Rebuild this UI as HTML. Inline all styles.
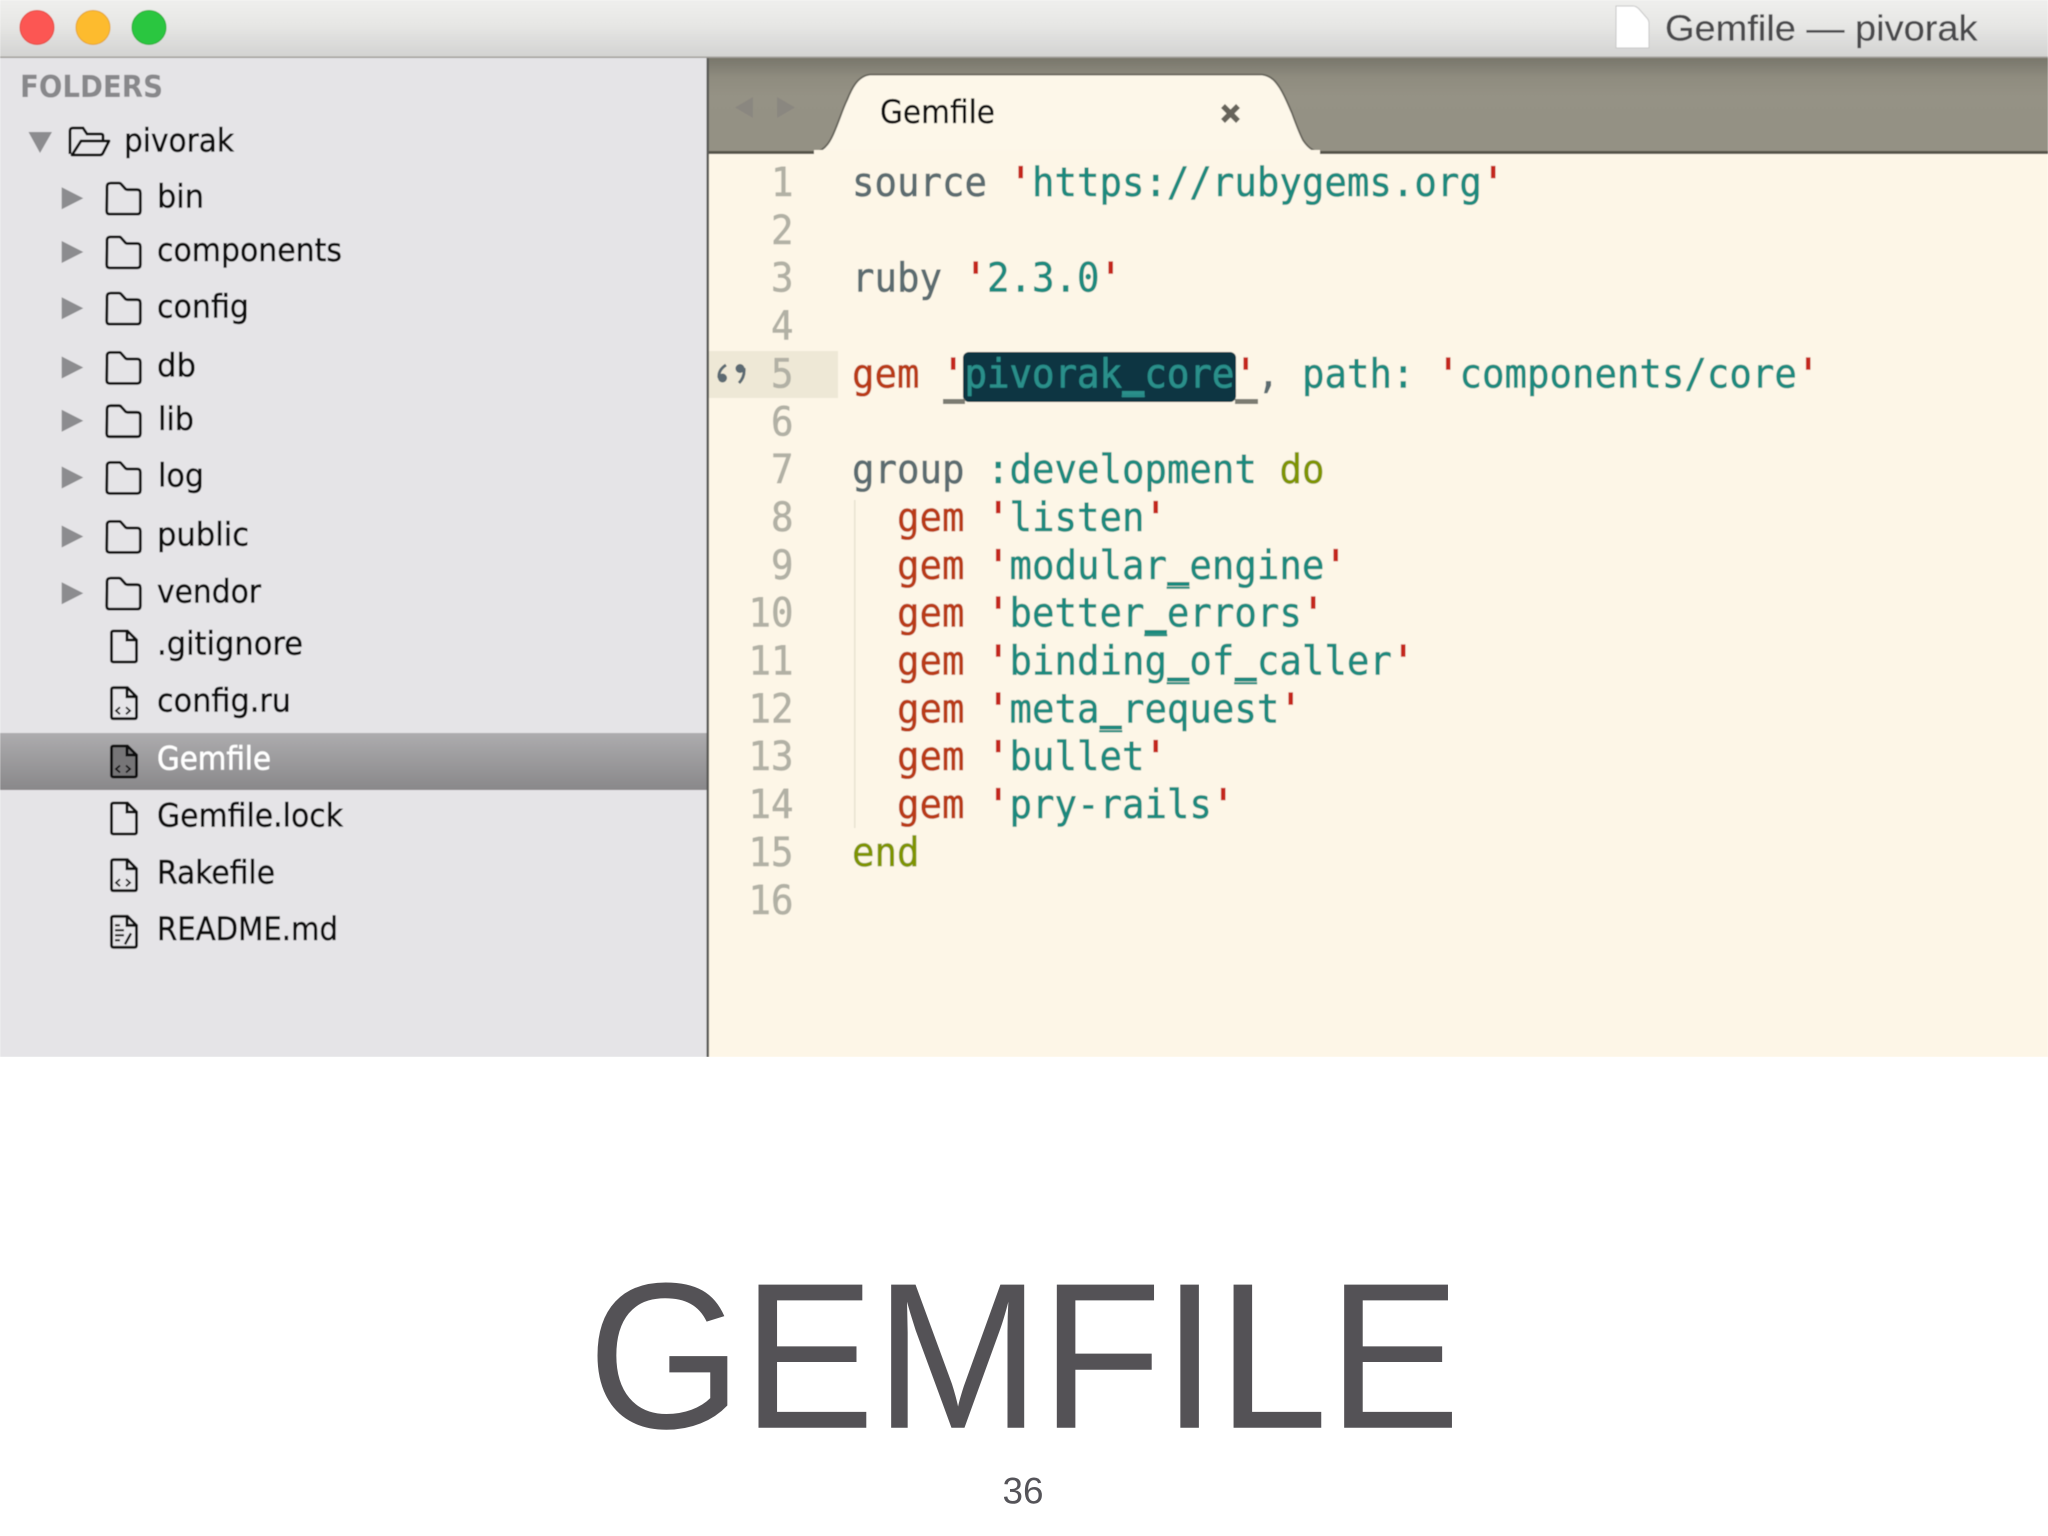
<!DOCTYPE html>
<html>
<head>
<meta charset="utf-8">
<title>Gemfile</title>
<style>
html,body{margin:0;padding:0;background:#fff;width:2048px;height:1536px;overflow:hidden}
svg{display:block;position:absolute;left:0;top:0}
.side text{font-family:"DejaVu Sans","Liberation Sans",sans-serif;font-size:32px;fill:#0c0c0c;stroke:#0c0c0c;stroke-width:.5px;transform:translateY(.7px)}
.code text{font-family:"DejaVu Sans Mono","Liberation Mono",monospace;font-size:37.37px;white-space:pre;stroke-width:.55px}
.n{fill:#b2b1a5;stroke:#b2b1a5}.k{fill:#5b6c70;stroke:#5b6c70}.r{fill:#b93a17;stroke:#b93a17}.q{fill:#c4261a;stroke:#c4261a;stroke-width:1.4px !important}.s{fill:#1f8a7e;stroke:#1f8a7e}.o{fill:#7f9400;stroke:#7f9400}
.u{fill:#1f8a7e}
</style>
</head>
<body>
<svg width="2048" height="1536" viewBox="0 0 2048 1536" xmlns="http://www.w3.org/2000/svg">
<defs>
<linearGradient id="tb" x1="0" y1="0" x2="0" y2="1"><stop offset="0" stop-color="#efefed"/><stop offset=".45" stop-color="#e6e6e4"/><stop offset="1" stop-color="#d2d2d1"/></linearGradient>
<linearGradient id="sel" x1="0" y1="0" x2="0" y2="1"><stop offset="0" stop-color="#adacae"/><stop offset="1" stop-color="#89888a"/></linearGradient>
<linearGradient id="bar" x1="0" y1="0" x2="0" y2="1"><stop offset="0" stop-color="#78766b"/><stop offset=".2" stop-color="#8f8c7f"/><stop offset=".4" stop-color="#959285"/><stop offset="1" stop-color="#949184"/></linearGradient>
<filter id="b" x="0" y="0" width="100%" height="100%"><feGaussianBlur stdDeviation=".6"/></filter>
<path id="tri" d="M61.7,-19.5 L83.3,-8.5 L61.7,2.5 Z" fill="#8c8c8f"/>
<path id="folder" d="M107,-20 q0,-3.6 3.6,-3.6 h8.5 q1.5,0 2.5,1.5 l4,4.5 q1,.6 2,.6 h9.5 q3.2,0 3.2,3 v18.4 q0,3 -3,3 h-27.6 q-3,0 -3,-3 z" fill="none" stroke="#0c0c0c" stroke-width="2.8"/>
<path id="file" d="M111.5,-21 q0,-2 2,-2 h14 l9,9 v20 q0,2 -2,2 h-21 q-2,0 -2,-2 z M127,-23 v9 h9.5" fill="none" stroke="#0c0c0c" stroke-width="2.8"/>
<path id="cd" d="M120,-3.5 l-4,3.5 4,3.5 M126,-3.5 l4,3.5 -4,3.5" fill="none" stroke="#0c0c0c" stroke-width="1.8"/>
</defs>

<g filter="url(#b)">
<!-- title bar -->
<rect x="0" y="0" width="2048" height="58" fill="url(#tb)"/>
<rect x="0" y="56.5" width="2048" height="2" fill="#a09e9a"/>
<circle cx="37" cy="27.5" r="17" fill="#fc5652" stroke="#e2483f" stroke-width="1"/>
<circle cx="93" cy="27.5" r="17" fill="#fdbb2e" stroke="#e3a42b" stroke-width="1"/>
<circle cx="149" cy="27.5" r="17" fill="#2ac63f" stroke="#24ae36" stroke-width="1"/>
<path d="M1616,6 h17 q3,0 6,3 l7,8 q3,3 3,6 v25 h-33 z" fill="#fff" stroke="#c8c8c8" stroke-width="1"/>
<text x="1665" y="40.7" textLength="312.5" lengthAdjust="spacingAndGlyphs" font-family="Liberation Sans, sans-serif" font-size="36" fill="#4a4a4c" stroke="#4a4a4c" stroke-width=".2">Gemfile — pivorak</text>

<!-- sidebar -->
<rect x="0" y="58" width="707" height="999" fill="#e5e4e7"/>
<rect x="0" y="733" width="707" height="57" fill="url(#sel)"/>
<rect x="706.5" y="58" width="2.5" height="999" fill="#5a5a56"/>

<!-- editor -->
<rect x="709" y="58" width="1339" height="96" fill="url(#bar)"/>
<rect x="709" y="151" width="1339" height="3" fill="#55534a"/>
<rect x="709" y="154" width="1339" height="903" fill="#fdf6e7"/>
<path d="M815,152.5 C826,150 831,140 835,130 C840,118 843,108 847,100 C851,90 857,76 870,74.5 H1262 C1272,76 1276,82 1280,88 C1285,96 1288,104 1292,113 C1296,124 1300,134 1303,140 C1307,146 1311,150 1319,152.5 Z" fill="#fdf7e9" stroke="#65635a" stroke-width="1.8"/>
<rect x="814" y="150" width="506" height="6" fill="#fdf6e7"/>
<path d="M753,97 L735,107.5 L753,118 Z" fill="#8a8780"/>
<path d="M777,97 L795,107.5 L777,118 Z" fill="#8a8780"/>
<text x="880" y="123" textLength="115" lengthAdjust="spacingAndGlyphs" font-family="DejaVu Sans, sans-serif" font-size="32" fill="#0c0c0c" stroke="#0c0c0c" stroke-width=".35">Gemfile</text>
<path d="M1223,106 L1238,121 M1238,106 L1223,121" stroke="#66645a" stroke-width="5.5" fill="none"/>

<!-- current line gutter -->
<rect x="709" y="351" width="129" height="47" fill="#eee8d6"/>
<path d="M726,365 Q718,370 719,378" fill="none" stroke="#5c6a72" stroke-width="3"/>
<circle cx="722.5" cy="378" r="4.5" fill="#5c6a72"/>
<path d="M739,383 Q745,377 744,368" fill="none" stroke="#5c6a72" stroke-width="3"/>
<circle cx="740" cy="368.5" r="4.5" fill="#5c6a72"/>

<!-- selection -->
<rect x="963" y="352" width="273" height="50" rx="6" fill="#073642"/>
<rect x="943" y="399" width="22" height="5" fill="#7b7b72"/>
<rect x="1235" y="399" width="23" height="5" fill="#7b7b72"/>
<rect x="854" y="500" width="1.5" height="328" fill="#e8e2d1"/>

<!-- sidebar tree -->
<g class="side">
<text x="20" y="97" textLength="143" lengthAdjust="spacingAndGlyphs" style="font-weight:bold;fill:#88888b;stroke:none;font-size:30px;transform:none">FOLDERS</text>

<path d="M28.5,132 H52 L40,153 Z" fill="#8c8c8f"/>
<path d="M70,154 V131 q0,-3 3,-3 h10 l4,6 h14 q2,0 2,2 v5" fill="none" stroke="#0c0c0c" stroke-width="2.8"/>
<path d="M72,155 H100 q2,0 3,-2 l6,-12 H81 Z" fill="none" stroke="#0c0c0c" stroke-width="2.8" stroke-linejoin="round"/>
<text x="124" y="150.7" textLength="110" lengthAdjust="spacingAndGlyphs">pivorak</text>

<g transform="translate(0,206.7)"><use href="#tri"/><use href="#folder"/><text x="157" textLength="47" lengthAdjust="spacingAndGlyphs">bin</text></g>
<g transform="translate(0,260.5)"><use href="#tri"/><use href="#folder"/><text x="157" textLength="185" lengthAdjust="spacingAndGlyphs">components</text></g>
<g transform="translate(0,316.7)"><use href="#tri"/><use href="#folder"/><text x="157" textLength="92" lengthAdjust="spacingAndGlyphs">config</text></g>
<g transform="translate(0,376)"><use href="#tri"/><use href="#folder"/><text x="157" textLength="39" lengthAdjust="spacingAndGlyphs">db</text></g>
<g transform="translate(0,429.3)"><use href="#tri"/><use href="#folder"/><text x="158" textLength="36" lengthAdjust="spacingAndGlyphs">lib</text></g>
<g transform="translate(0,486)"><use href="#tri"/><use href="#folder"/><text x="158" textLength="46" lengthAdjust="spacingAndGlyphs">log</text></g>
<g transform="translate(0,545)"><use href="#tri"/><use href="#folder"/><text x="157" textLength="92" lengthAdjust="spacingAndGlyphs">public</text></g>
<g transform="translate(0,601.7)"><use href="#tri"/><use href="#folder"/><text x="157" textLength="104" lengthAdjust="spacingAndGlyphs">vendor</text></g>

<g transform="translate(0,654)"><use href="#file"/><text x="157" textLength="146" lengthAdjust="spacingAndGlyphs">.gitignore</text></g>
<g transform="translate(0,710.7)"><use href="#file"/><use href="#cd"/><text x="157" textLength="134" lengthAdjust="spacingAndGlyphs">config.ru</text></g>
<g transform="translate(0,769)"><path d="M111.5,-21 q0,-2 2,-2 h14 l9,9 v20 q0,2 -2,2 h-21 q-2,0 -2,-2 z" fill="#767577"/><use href="#file"/><use href="#cd"/><text x="157" textLength="114" lengthAdjust="spacingAndGlyphs" style="fill:#fff;stroke:#fff">Gemfile</text></g>
<g transform="translate(0,826)"><use href="#file"/><text x="157" textLength="186" lengthAdjust="spacingAndGlyphs">Gemfile.lock</text></g>
<g transform="translate(0,882.7)"><use href="#file"/><use href="#cd"/><text x="157" textLength="118" lengthAdjust="spacingAndGlyphs">Rakefile</text></g>
<g transform="translate(0,939.3)"><use href="#file"/><path d="M115,-14 h5 M115,-9 h9 M115,-4 h9 M115,1 h5" stroke="#0c0c0c" stroke-width="2" fill="none"/><path d="M131,-6 L125,5" stroke="#0c0c0c" stroke-width="2.4" fill="none"/><text x="157" textLength="181" lengthAdjust="spacingAndGlyphs">README.md</text></g>
</g>

<!-- code -->
<g class="code">
<g transform="translate(0,196) scale(1,1.07)"><text class="n" x="771">1</text><text class="k" x="852">source</text><text class="q" x="1009.5">'</text><text class="s" x="1032">https://rubygems.org</text><text class="q" x="1482">'</text></g>
<g transform="translate(0,243.85) scale(1,1.07)"><text class="n" x="771">2</text></g>
<g transform="translate(0,291.7) scale(1,1.07)"><text class="n" x="771">3</text><text class="k" x="852">ruby</text><text class="q" x="964.5">'</text><text class="s" x="987">2.3.0</text><text class="q" x="1099.5">'</text></g>
<g transform="translate(0,339.55) scale(1,1.07)"><text class="n" x="771">4</text></g>
<g transform="translate(0,387.4) scale(1,1.07)"><text class="n" x="771">5</text><text class="r" x="852">gem</text><text class="q" x="942">'</text><text x="964.5" style="fill:#2a8f8a;stroke:#2a8f8a">pivorak_core</text><text class="q" x="1234.5">'</text><text class="k" x="1257">,</text><text class="s" x="1302">path:</text><text class="q" x="1437">'</text><text class="s" x="1459.5">components/core</text><text class="q" x="1797">'</text></g>
<g transform="translate(0,435.25) scale(1,1.07)"><text class="n" x="771">6</text></g>
<g transform="translate(0,483.1) scale(1,1.07)"><text class="n" x="771">7</text><text class="k" x="852">group</text><text class="s" x="987">:development</text><text class="o" x="1279.5">do</text></g>
<g transform="translate(0,530.95) scale(1,1.07)"><text class="n" x="771">8</text><text class="r" x="897">gem</text><text class="q" x="987">'</text><text class="s" x="1009.5">listen</text><text class="q" x="1144.5">'</text></g>
<g transform="translate(0,578.8) scale(1,1.07)"><text class="n" x="771">9</text><text class="r" x="897">gem</text><text class="q" x="987">'</text><text class="s" x="1009.5">modular_engine</text><text class="q" x="1324.5">'</text></g>
<g transform="translate(0,626.65) scale(1,1.07)"><text class="n" x="748.5">10</text><text class="r" x="897">gem</text><text class="q" x="987">'</text><text class="s" x="1009.5">better_errors</text><text class="q" x="1302">'</text></g>
<g transform="translate(0,674.5) scale(1,1.07)"><text class="n" x="748.5">11</text><text class="r" x="897">gem</text><text class="q" x="987">'</text><text class="s" x="1009.5">binding_of_caller</text><text class="q" x="1392">'</text></g>
<g transform="translate(0,722.35) scale(1,1.07)"><text class="n" x="748.5">12</text><text class="r" x="897">gem</text><text class="q" x="987">'</text><text class="s" x="1009.5">meta_request</text><text class="q" x="1279.5">'</text></g>
<g transform="translate(0,770.2) scale(1,1.07)"><text class="n" x="748.5">13</text><text class="r" x="897">gem</text><text class="q" x="987">'</text><text class="s" x="1009.5">bullet</text><text class="q" x="1144.5">'</text></g>
<g transform="translate(0,818.05) scale(1,1.07)"><text class="n" x="748.5">14</text><text class="r" x="897">gem</text><text class="q" x="987">'</text><text class="s" x="1009.5">pry-rails</text><text class="q" x="1212">'</text></g>
<g transform="translate(0,865.9) scale(1,1.07)"><text class="n" x="748.5">15</text><text class="o" x="852">end</text></g>
<g transform="translate(0,913.75) scale(1,1.07)"><text class="n" x="748.5">16</text></g>
</g>
<!-- heavier underscores -->
<rect x="1122" y="391" width="22.5" height="4" fill="#2a8f8a"/>
<rect class="u" x="1167" y="582" width="22.5" height="4"/>
<rect class="u" x="1144.5" y="630" width="22.5" height="4"/>
<rect class="u" x="1167" y="677.5" width="22.5" height="4"/>
<rect class="u" x="1234.5" y="677.5" width="22.5" height="4"/>
<rect class="u" x="1099.5" y="725.5" width="22.5" height="4"/>
</g>

<!-- slide caption -->
<text x="587.5" y="1427.7" textLength="873" lengthAdjust="spacingAndGlyphs" font-family="Liberation Sans, sans-serif" font-size="208" fill="#545256">GEMFILE</text>
<text x="1002.5" y="1503.3" textLength="41" lengthAdjust="spacingAndGlyphs" font-family="Liberation Sans, sans-serif" font-size="37" fill="#555459">36</text>
</svg>
</body>
</html>
